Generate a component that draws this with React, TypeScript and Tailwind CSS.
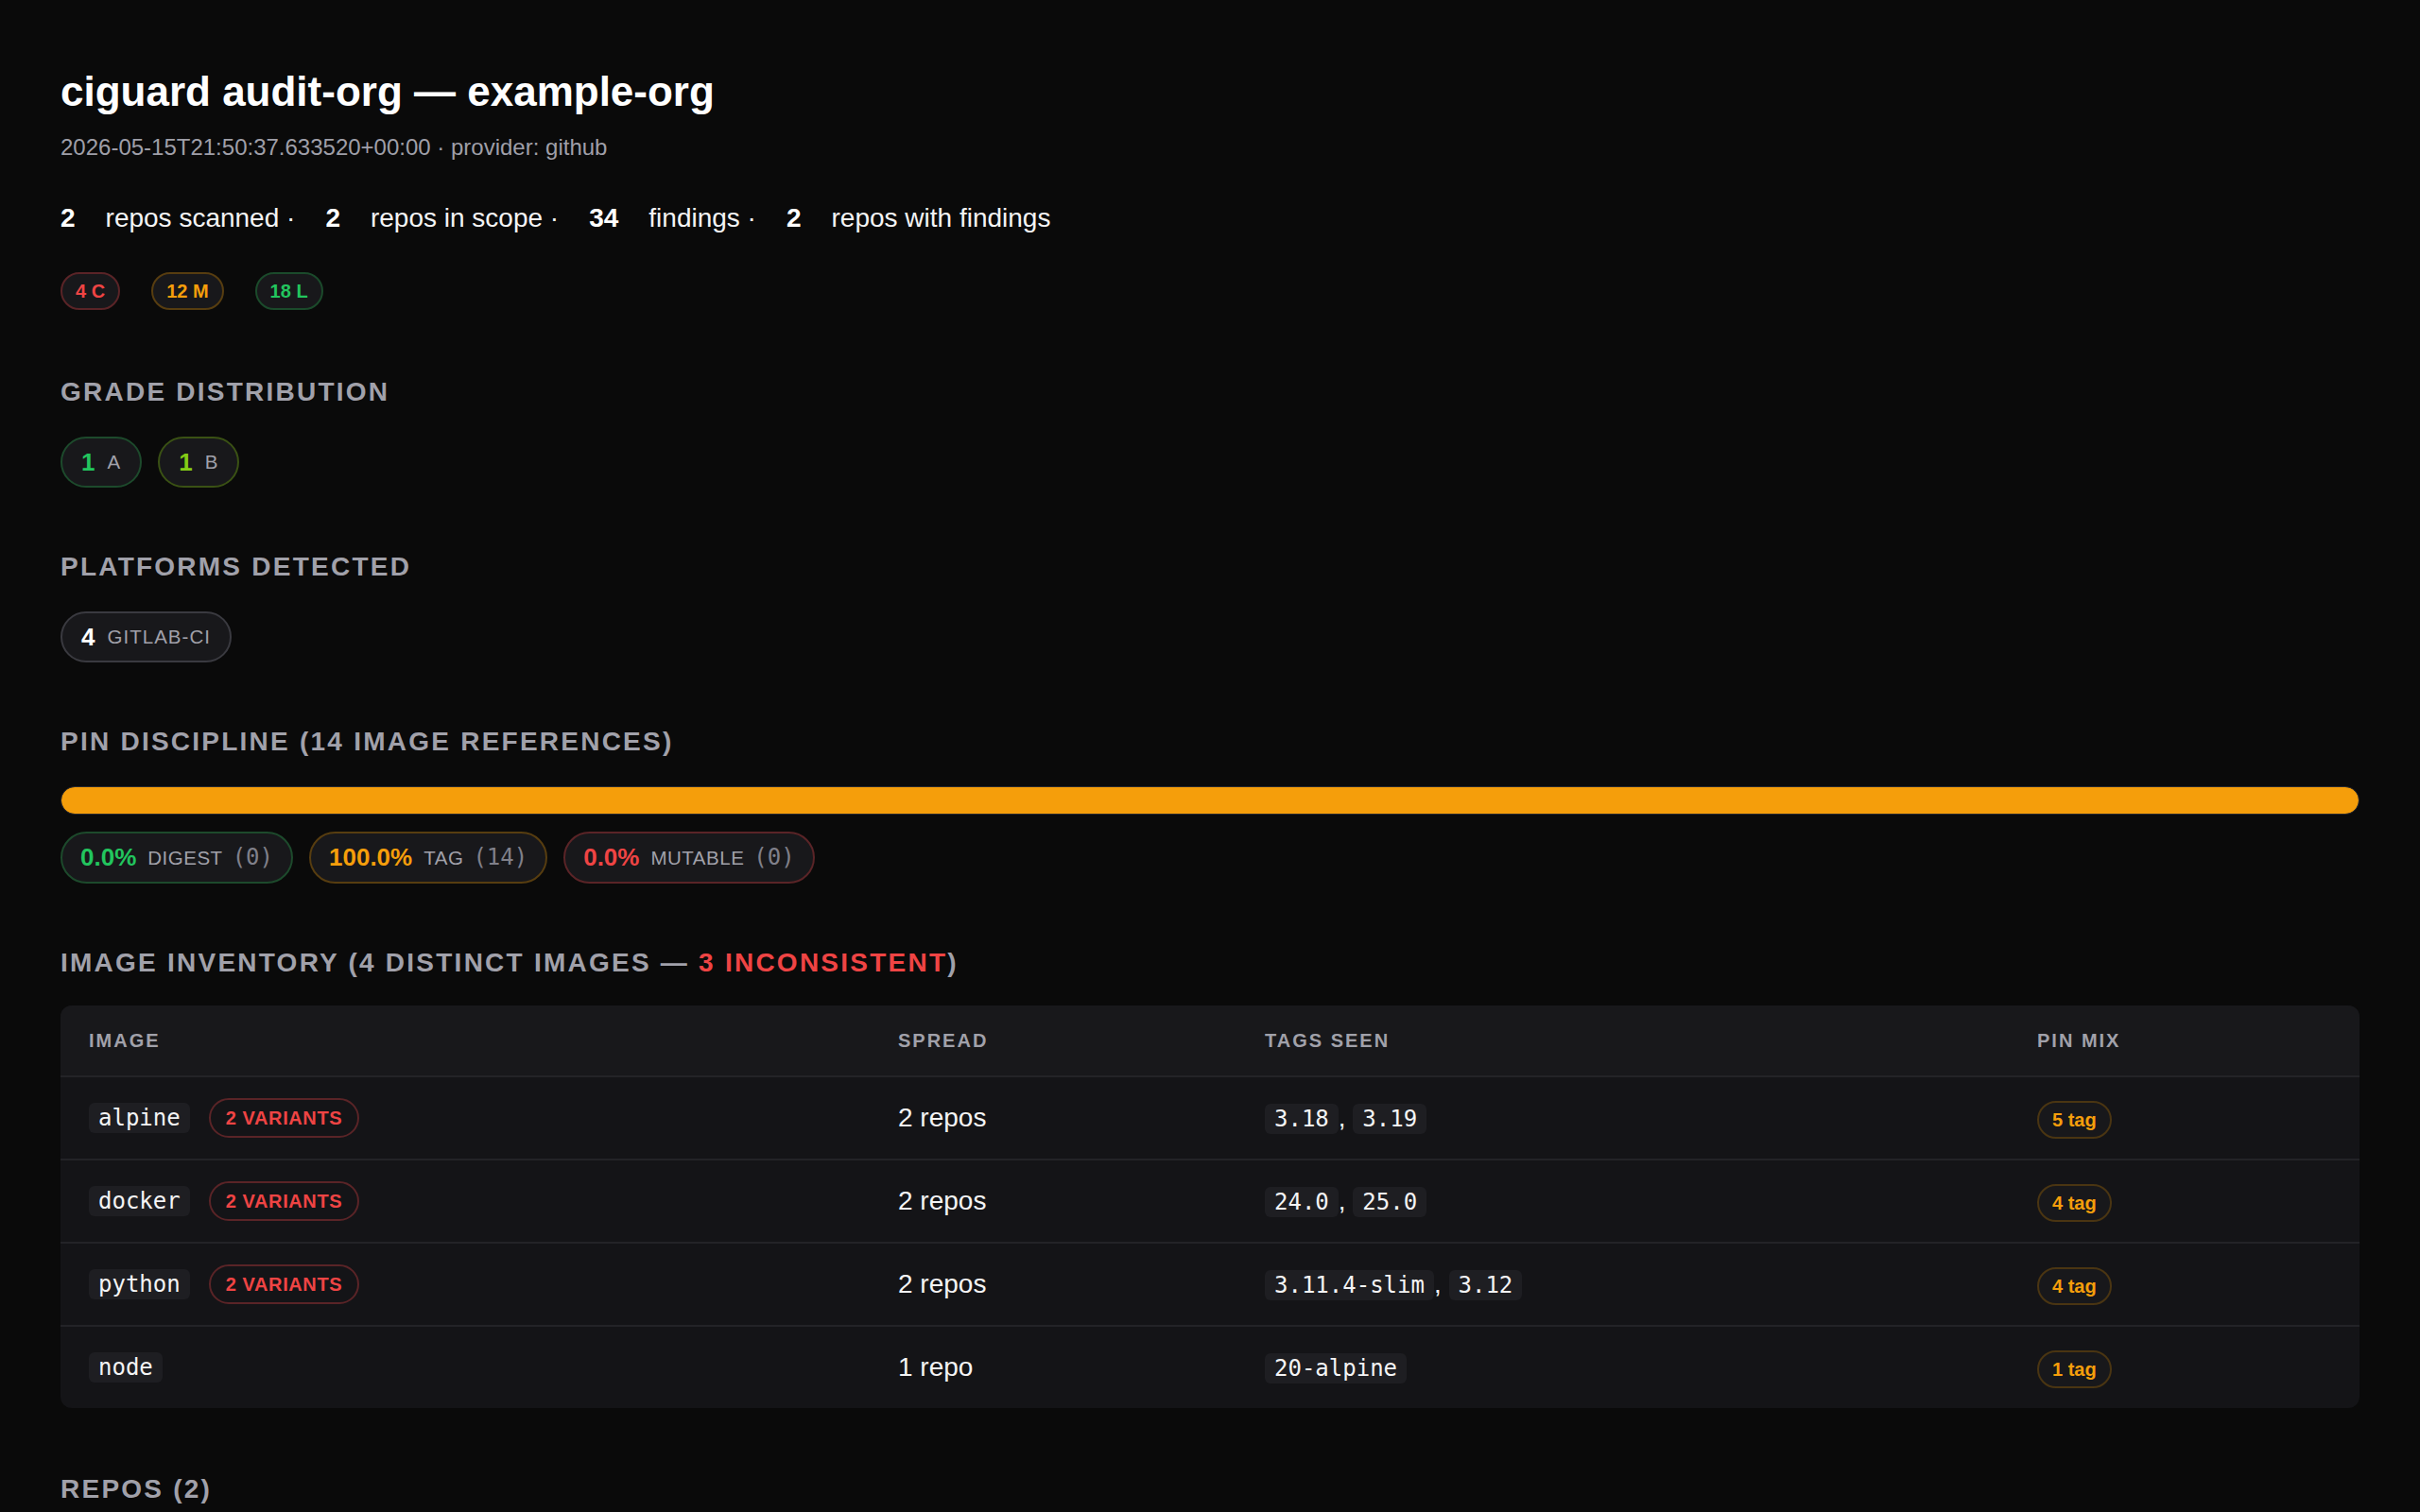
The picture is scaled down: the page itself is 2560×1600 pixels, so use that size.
import { Fragment, ReactNode } from 'react'

const sans = "font-['Liberation_Sans',Arial,sans-serif]"
const mono = "font-['DejaVu_Sans_Mono',monospace]"

const severity = [
  { label: '4 C', cls: 'text-[#ef4444] border-[#5a2427]' },
  { label: '12 M', cls: 'text-[#f59e0b] border-[#573d10]' },
  { label: '18 L', cls: 'text-[#22c55e] border-[#1b4a2b]' },
]

const stats = [
  { n: '2', label: 'repos scanned ·' },
  { n: '2', label: 'repos in scope ·' },
  { n: '34', label: 'findings ·' },
  { n: '2', label: 'repos with findings' },
]

const images = [
  { name: 'alpine', variants: 2, spread: '2 repos', tags: ['3.18', '3.19'], mix: '5 tag' },
  { name: 'docker', variants: 2, spread: '2 repos', tags: ['24.0', '25.0'], mix: '4 tag' },
  { name: 'python', variants: 2, spread: '2 repos', tags: ['3.11.4-slim', '3.12'], mix: '4 tag' },
  { name: 'node', variants: 0, spread: '1 repo', tags: ['20-alpine'], mix: '1 tag' },
]

function Heading({ children }: { children: ReactNode }) {
  return (
    <h2 className="text-[28px] leading-9 font-bold uppercase tracking-[0.08em] text-[#a1a1aa]">
      {children}
    </h2>
  )
}

function Section({
  title,
  children,
  className = 'mt-[66px]',
  gap = 'mt-[29px]',
}: {
  title: ReactNode
  children?: ReactNode
  className?: string
  gap?: string
}) {
  return (
    <section className={className}>
      <Heading>{title}</Heading>
      {children && <div className={gap}>{children}</div>}
    </section>
  )
}

function Chip({ children }: { children: ReactNode }) {
  return (
    <code className={`${mono} inline-block rounded-md bg-[#1e1e22] px-[10px] py-[2px] text-[24px] leading-7 text-[#f4f4f5]`}>
      {children}
    </code>
  )
}

function CountPill({ n, label, color, border }: { n: string; label: string; color: string; border: string }) {
  return (
    <span className={`inline-flex items-center gap-[13px] rounded-full border-2 bg-[#18181b] px-5 py-[10px] ${border}`}>
      <b className={`text-[26px] leading-[30px] font-bold ${color}`}>{n}</b>
      <span className="text-[20.5px] leading-[30px] uppercase tracking-[0.05em] text-[#a1a1aa]">{label}</span>
    </span>
  )
}

function PinPill({ pct, label, count, color, border }: { pct: string; label: string; count: string; color: string; border: string }) {
  return (
    <span className={`inline-flex items-center rounded-full border-2 bg-[#18181b] px-[19px] py-[10px] ${border}`}>
      <b className={`text-[26px] leading-[31px] font-bold ${color}`}>{pct}</b>
      <span className="ml-3 text-[20.5px] leading-[31px] uppercase tracking-[0.025em] text-[#a1a1aa]">{label}</span>
      <span className={`${mono} ml-[10px] text-[24px] leading-[31px] text-[#80808a]`}>{count}</span>
    </span>
  )
}

export default function App() {
  return (
    <div className={`${sans} min-h-screen bg-[#0a0a0a] px-16 pt-[71px] pb-24 text-[#f4f4f5]`}>
      {/* ── Header ─────────────────────────────── */}
      <h1 className="text-[44px] leading-[52px] font-bold text-white">ciguard audit-org — example-org</h1>
      <p className="mt-[17px] text-[24px] leading-8 text-[#9f9fa8]">
        2026-05-15T21:50:37.633520+00:00 · provider: github
      </p>

      <div className="mt-[41px] flex text-[28px] leading-9">
        {stats.map((s, i) => (
          <span key={i} className={i > 0 ? 'ml-8' : ''}>
            <b className="font-bold text-white">{s.n}</b>
            <span className="ml-8">{s.label}</span>
          </span>
        ))}
      </div>

      <div className="mt-[39px] flex gap-[33px]">
        {severity.map((s) => (
          <span
            key={s.label}
            className={`rounded-full border-2 bg-[#18181b] px-[14px] py-[6px] text-[20px] leading-6 font-bold ${s.cls}`}
          >
            {s.label}
          </span>
        ))}
      </div>

      {/* ── Grades ─────────────────────────────── */}
      <Section title="Grade distribution" className="mt-[69px]">
        <div className="flex gap-[17px]">
          <CountPill n="1" label="A" color="text-[#22c55e]" border="border-[#1d4a2c]" />
          <CountPill n="1" label="B" color="text-[#84cc16]" border="border-[#3a5114]" />
        </div>
      </Section>

      <Section title="Platforms detected">
        <div className="flex">
          <CountPill n="4" label="gitlab-ci" color="text-white" border="border-[#3a3a40]" />
        </div>
      </Section>

      {/* ── Pin discipline ─────────────────────── */}
      <Section title="Pin discipline (14 image references)">
        <div className="h-[30px] overflow-hidden rounded-full border border-[#2a2a2e] bg-[#18181b]">
          <div className="h-full rounded-full bg-[#f59e0b]" style={{ width: '100%' }} />
        </div>
        <div className="mt-[18px] flex gap-[17px]">
          <PinPill pct="0.0%" label="digest" count="(0)" color="text-[#22c55e]" border="border-[#1d4a2c]" />
          <PinPill pct="100.0%" label="tag" count="(14)" color="text-[#f59e0b]" border="border-[#573d10]" />
          <PinPill pct="0.0%" label="mutable" count="(0)" color="text-[#ef4444]" border="border-[#5a2427]" />
        </div>
      </Section>

      {/* ── Image inventory ────────────────────── */}
      <Section
        title={
          <>
            Image inventory (4 distinct images — <span className="text-[#ef4444]">3 inconsistent</span>)
          </>
        }
        gap="mt-[27px]"
      >
        <div className="overflow-hidden rounded-xl bg-[#141417]">
          <div className="grid h-[74px] grid-cols-[856px_388px_817px_1fr] items-center bg-[#18181b] text-[20px] font-bold uppercase tracking-[0.1em] text-[#a1a1aa]">
            <div className="pl-[30px]">Image</div>
            <div className="pl-[30px]">Spread</div>
            <div className="pl-[30px]">Tags seen</div>
            <div className="pl-[30px]">Pin mix</div>
          </div>
          {images.map((img) => (
            <div
              key={img.name}
              className="grid h-[88px] grid-cols-[856px_388px_817px_1fr] items-center border-t-2 border-[#232327] text-[28px]"
            >
              <div className="flex items-center gap-5 pl-[30px]">
                <Chip>{img.name}</Chip>
                {img.variants > 0 && (
                  <span className="rounded-full border-2 border-[#5a2427] px-4 py-[7px] text-[20px] leading-6 font-bold uppercase tracking-[0.03em] text-[#ef4444]">
                    {img.variants} variants
                  </span>
                )}
              </div>
              <div className="pl-[30px]">{img.spread}</div>
              <div className="pl-[30px]">
                {img.tags.map((t, i) => (
                  <Fragment key={t}>
                    {i > 0 && ', '}
                    <Chip>{t}</Chip>
                  </Fragment>
                ))}
              </div>
              <div className="pl-[30px]">
                <span className="inline-block rounded-full border-2 border-[#4a3512] bg-[#18181b] px-[14px] py-[6px] text-[20px] leading-6 font-bold text-[#f59e0b]">
                  {img.mix}
                </span>
              </div>
            </div>
          ))}
        </div>
      </Section>

      <Section title="Repos (2)" className="mt-[68px]" />
    </div>
  )
}
